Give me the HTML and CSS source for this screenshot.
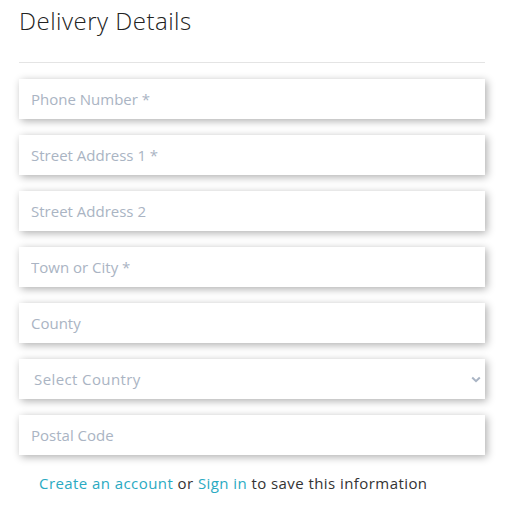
FILE: index.html
```html
<!DOCTYPE html>
<html lang="en">
<head>
<meta charset="utf-8">
<title>Delivery Details</title>
<link rel="stylesheet" href="styles.css">
</head>
<body>
<main class="delivery">
  <h2 class="delivery__title">Delivery Details</h2>
  <hr class="delivery__rule">
  <form class="delivery__form">
    <input class="field" type="text" placeholder="Phone Number *">
    <input class="field" type="text" placeholder="Street Address 1 *">
    <input class="field" type="text" placeholder="Street Address 2">
    <input class="field" type="text" placeholder="Town or City *">
    <input class="field" type="text" placeholder="County">
    <div class="select-wrap">
      <select class="field field--select">
        <option>Select Country</option>
      </select>
      <svg class="select-wrap__chev" width="10" height="7" viewBox="0 0 10 7"><path d="M1.2 1.5 5 5.2 8.8 1.5" fill="none" stroke="#a9b4c4" stroke-width="2"/></svg>
    </div>
    <input class="field" type="text" placeholder="Postal Code">
  </form>
  <p class="delivery__note"><a href="#">Create an account</a> or <a href="#">Sign in</a> to save this information</p>
</main>
</body>
</html>
```
FILE: styles.css
```css
* { box-sizing: border-box; }
html, body { margin: 0; background: #fff; }
body { font-family: "Open Sans", "Lato", sans-serif; color: #222; }
.delivery { width: 466px; margin-left: 19px; padding-top: 7px; }
.delivery__title { margin: 0; font-size: 24px; font-weight: 300; line-height: 28px; color: #222; letter-spacing: 0.5px; }
.delivery__rule { margin: 27px 0 16px; border: 0; border-top: 1px solid #e4e4e4; height: 0; }
.delivery__form { display: flex; flex-direction: column; gap: 16px; }
.field {
  display: block; width: 100%; height: 40px; border: 0; margin: 0;
  padding: 0 12px; background: #fff; font-family: inherit; font-size: 15px;
  color: #333; box-shadow: 2px 2px 8px rgba(0,0,0,0.32); outline: none;
}
.field::placeholder { color: #aab4c3; }
.select-wrap { position: relative; }
.field--select { appearance: none; -webkit-appearance: none; padding-left: 15px; color: #aab4c3; letter-spacing: 0.4px; }
.select-wrap__chev { position: absolute; right: 4px; top: 17px; }
.delivery__note { margin: 18px 0 0 20px; font-size: 15px; color: #333; letter-spacing: 0.43px; }
.delivery__note a { color: #2aaac2; text-decoration: none; }
```
